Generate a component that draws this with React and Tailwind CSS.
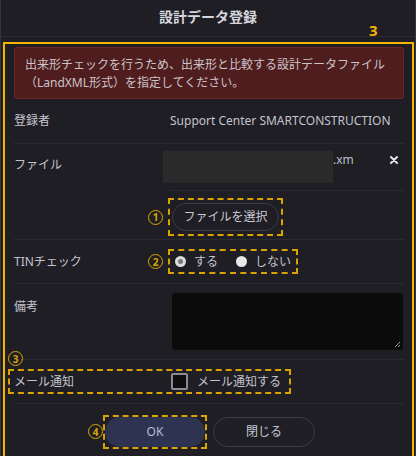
import React from 'react'

// annotation marker: orange ring with a bold digit
const Circled = ({ n, className = '' }) => (
  <span
    className={`w-[15px] h-[15px] shrink-0 rounded-full border-[1.5px] border-[#dca600] flex items-center justify-center text-[10px] leading-none font-bold text-[#dca600] font-['Noto_Sans',sans-serif] ${className}`}
  >
    {n}
  </span>
)

const Radio = ({ checked, label }) => (
  <label className='flex items-center gap-[8px]'>
    {checked ? (
      <span className='w-[11px] h-[11px] rounded-full bg-[#dcdcdc] flex items-center justify-center'>
        <span className='w-[5px] h-[5px] rounded-full bg-[#7a7a7a]'></span>
      </span>
    ) : (
      <span className='w-[11px] h-[11px] rounded-full bg-[#e8e8e8]'></span>
    )}
    <span>{label}</span>
  </label>
)

const App = () => {
  return (
    <div className="min-h-screen bg-white font-['Noto_Sans','Noto_Sans_CJK_JP',sans-serif] text-[12px] leading-[18px] text-[#c4c4ce]">
      <div className='w-[416px] h-[456px] bg-[#1e1e24] border-x border-[#34343b] overflow-hidden flex flex-col'>
        {/* header */}
        <div className='relative h-[37px] shrink-0 border-b border-[#2a2a31] flex items-center justify-center'>
          <h2 className='text-[14px] font-bold text-[#d6d6de] -mt-[2px]'>設計データ登録</h2>
          <span className='absolute left-[368px] top-[21px] text-[15px] font-bold text-[#f5b400]'>3</span>
        </div>

        {/* annotated body */}
        <div className='mt-[5px] ml-[2px] mr-[1px] flex-1 border-2 border-b-0 border-[#f5b400] pl-[9px] pr-[8px] pt-[3px]'>
          <div className='h-[52px] rounded-[3px] border border-[#6a2727] bg-[#4f1d1e] pl-[10px] pt-[8px] text-[#cdc3c8]'>
            <p>出来形チェックを行うため、出来形と比較する設計データファイル</p>
            <p>（LandXML形式）を指定してください。</p>
          </div>

          {/* registrant */}
          <div className='h-[45px] border-b border-[#2a2a31] flex items-center'>
            <span className='w-[156px] shrink-0'>登録者</span>
            <span>Support Center SMARTCONSTRUCTION</span>
          </div>

          {/* file */}
          <div className='h-[96px] border-b border-[#2a2a31]'>
            <div className='flex h-[47px]'>
              <span className='w-[149px] shrink-0 pt-[12px]'>ファイル</span>
              <div className='flex-1 flex flex-col'>
                <div className='h-[46px] flex items-start'>
                  <div className='mt-[7px] w-[170px] h-[32px] bg-[#2a2a2a]'></div>
                  <span className='mt-[7px] text-[#bfbfc8]'>.xm</span>
                  <svg className='ml-auto mr-[6px] mt-[12px]' width='8' height='8' viewBox='0 0 8 8'>
                    <path d='M1 1l6 6M7 1l-6 6' stroke='#e0e0e6' strokeWidth='2' strokeLinecap='round' />
                  </svg>
                </div>
                <div className='ml-[7px] border-t border-[#2a2a31]'></div>
              </div>
            </div>
            <div className='flex items-center pl-[134px] pt-[7px]'>
              <Circled n='1' className='mr-[5px]' />
              <div className='w-[115px] h-[38px] border-2 border-dashed border-[#d9a400] flex items-center justify-center'>
                <button className='w-[107px] h-[28px] rounded-full border border-[#3b3b4a] text-[12px] text-[#c8c8d2]'>
                  ファイルを選択
                </button>
              </div>
            </div>
          </div>

          {/* TIN check */}
          <div className='h-[44px] border-b border-[#2a2a31] flex items-center'>
            <span className='w-[134px] shrink-0'>TINチェック</span>
            <Circled n='2' className='mr-[5px]' />
            <div className='h-[25px] border-2 border-dashed border-[#d9a400] flex items-center gap-[18px] pl-[5px] pr-[5px]'>
              <Radio checked label='する' />
              <Radio label='しない' />
            </div>
          </div>

          {/* remarks */}
          <div className='h-[76px] border-b border-[#2a2a31] flex'>
            <span className='w-[157px] shrink-0 pt-[14px]'>備考</span>
            <div className='relative mt-[8px] flex-1 h-[59px] rounded-[4px] bg-[#0b0b0b] border border-[#202024]'>
              <svg className='absolute right-[2px] bottom-[2px]' width='7' height='7' viewBox='0 0 7 7'>
                <path d='M6 1L1 6M6 4L4 6' stroke='#9a9aa2' strokeWidth='1' />
              </svg>
            </div>
          </div>

          {/* mail */}
          <div className='relative h-[44px] border-b border-[#2a2a31] flex items-center'>
            <Circled n='3' className='absolute -left-[6px] -top-[9px]' />
            <div className='-ml-[6px] h-[25px] w-[283px] border-2 border-dashed border-[#d9a400] flex items-center pl-[4px]'>
              <span className='w-[157px] shrink-0'>メール通知</span>
              <span className='w-[17px] h-[17px] rounded-[2px] border-2 border-[#8a8a90] bg-[#0e0e0e]'></span>
              <span className='ml-[9px]'>メール通知する</span>
            </div>
          </div>

          {/* actions */}
          <div className='flex justify-center gap-[6px] pt-[11px]'>
            <div className='relative w-[104px] h-[34px] border-2 border-dashed border-[#d9a400]'>
              <Circled n='4' className='absolute right-full mr-[2px] top-[7px]' />
              <button className='w-full h-full rounded-full bg-[#2e3351] text-[12px] text-[#b9bdd9]'>OK</button>
            </div>
            <button className='mt-[2px] w-[102px] h-[30px] rounded-full border border-[#3c3c4a] text-[12px] text-[#c8c8d2]'>
              閉じる
            </button>
          </div>
        </div>
      </div>
    </div>
  )
}

export default App
